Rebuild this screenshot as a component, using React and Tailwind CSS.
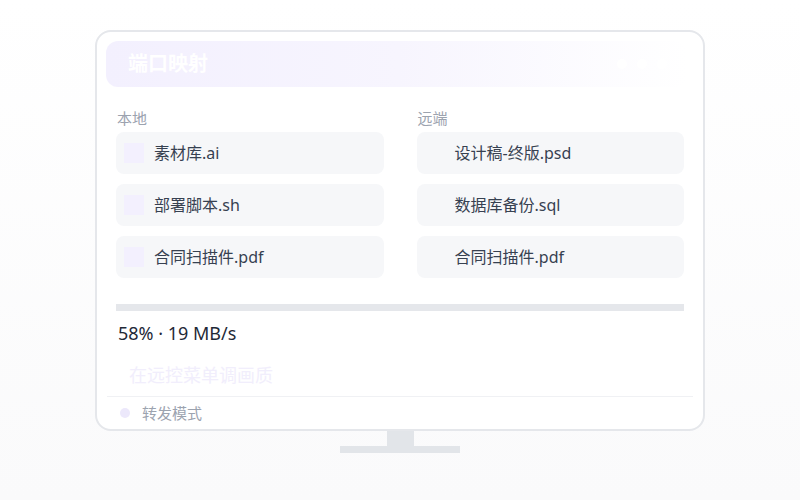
import React from 'react';

const localFiles = ['素材库.ai', '部署脚本.sh', '合同扫描件.pdf'];
const remoteFiles = ['设计稿-终版.psd', '数据库备份.sql', '合同扫描件.pdf'];

const FileRow = ({ name, marker }) => (
  <div className="h-[42px] rounded-lg bg-[#f6f7f9] flex items-center px-2">
    <span className={`w-5 h-5 shrink-0 ${marker ? 'bg-[#f3f0fe]' : 'bg-transparent'}`} />
    <span className="ml-[10px] text-[16px] text-[#374151]">{name}</span>
  </div>
);

const Column = ({ title, files, marker }) => (
  <div className="flex flex-col">
    <div className="h-5 text-[15px] leading-5 text-[#9ca3af] pl-px">{title}</div>
    <div className="mt-1 flex flex-col gap-[10px]">
      {files.map((f, i) => (
        <FileRow key={i} name={f} marker={marker} />
      ))}
    </div>
  </div>
);

export default function App() {
  return (
    <div
      className="w-[800px] h-[500px] bg-gradient-to-b from-white to-[#fafafb] flex flex-col items-center pt-[30px]"
      style={{ fontFamily: '"Noto Sans", "Noto Sans CJK SC", sans-serif' }}
    >
      {/* screen */}
      <div className="w-[610px] h-[401px] border-2 border-[#e5e7eb] rounded-2xl bg-white flex flex-col">
        {/* title bar */}
        <div className="ml-[9px] mt-[9px] mr-[16px] h-[46px] rounded-xl bg-gradient-to-r from-[#f3f0fe] via-[#f7f5fe] to-white flex items-center justify-between pl-[22px] pr-[20px]">
          <span className="text-[20px] font-bold text-white">端口映射</span>
          <div className="flex gap-[10px]">
            <span className="w-[10px] h-[10px] rounded-full bg-white" />
            <span className="w-[10px] h-[10px] rounded-full bg-white" />
            <span className="w-[10px] h-[10px] rounded-full bg-white" />
          </div>
        </div>

        <div className="px-[19px] mt-[21px] grid grid-cols-2 gap-[33px]">
          <Column title="本地" files={localFiles} marker />
          <Column title="远端" files={remoteFiles} />
        </div>

        {/* transfer progress */}
        <div className="px-[19px] mt-[26px]">
          <div className="h-[7px] bg-[#e5e7eb]" />
          <div className="mt-[9px] text-[18px] leading-[26px] text-[#1f2937] pl-[2px]">58% · 19 MB/s</div>
          <div className="mt-[16px] pl-[13px] text-[18px] leading-[26px] text-[#f1eefc]">在远控菜单调画质</div>
        </div>

        <div className="mx-[10px] mt-[8px] border-t border-[#f0f1f4]" />
        <div className="flex items-center px-[23px] h-[32px]">
          <span className="w-[10px] h-[10px] rounded-full bg-[#ece8fb]" />
          <span className="ml-[12px] text-[15px] text-[#9ca3af]">转发模式</span>
        </div>
      </div>

      {/* stand */}
      <div className="w-[27px] h-[15px] bg-[#e2e5e9]" />
      <div className="w-[120px] h-[7px] bg-[#e2e5e9]" />
    </div>
  );
}
